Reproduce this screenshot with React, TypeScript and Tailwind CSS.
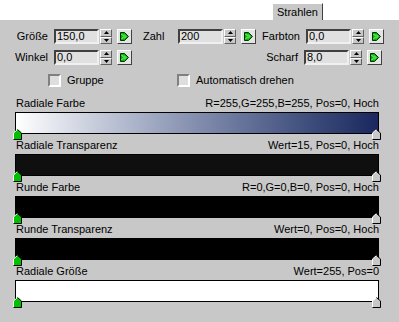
import React from "react";

const font = "font-['Liberation_Sans',Arial,sans-serif]";

function Spinner() {
  return (
    <div className="ml-[1px] flex h-[15px] w-[12px] flex-col">
      {[0, 1].map((i) => (
        <div
          key={i}
          className="flex h-[7.5px] items-center justify-center border border-t-white border-l-white border-r-[#606060] border-b-[#606060] bg-[#c8c8c8]"
        >
          <svg width="5" height="3" viewBox="0 0 5 3">
            {i === 0 ? (
              <polygon points="2.5,0 5,3 0,3" fill="#000" />
            ) : (
              <polygon points="0,0 5,0 2.5,3" fill="#000" />
            )}
          </svg>
        </div>
      ))}
    </div>
  );
}

function KeyButton() {
  return (
    <div className="ml-[5px] flex h-[15px] w-[15px] items-center justify-center border border-t-white border-l-white border-r-[#404040] border-b-[#404040] bg-[#e4e4e4]">
      <svg width="9" height="9" viewBox="0 0 9 9">
        <polygon points="0.5,0.5 4.5,0.5 8.5,4.5 4.5,8.5 0.5,8.5" fill="#00b400" stroke="#003000" />
        <polyline points="1.5,2 4,4.5 1.5,7" fill="none" stroke="#9cff9c" />
        <polyline points="4,2.5 6,4.5 4,6.5" fill="none" stroke="#9cff9c" />
      </svg>
    </div>
  );
}

function Field({ value }: { value: string }) {
  return (
    <div className="flex h-[15px] w-[45px] items-center border-2 border-t-[#404040] border-l-[#404040] border-r-[#f0f0f0] border-b-[#f0f0f0] bg-[#e0e0e0] pl-[1px] text-[11px] leading-none text-black">
      {value}
    </div>
  );
}

function SpinnerGroup({ value }: { value: string }) {
  return (
    <div className="flex items-center">
      <Field value={value} />
      <Spinner />
      <KeyButton />
    </div>
  );
}

function Checkbox({ label }: { label: string }) {
  return (
    <div className="flex items-center">
      <div className="h-[13px] w-[13px] border-2 border-t-[#808080] border-l-[#808080] border-r-white border-b-white bg-[#dedede]" />
      <span className="ml-[6px] text-[11px] leading-[13px]">{label}</span>
    </div>
  );
}

function Marker({ side }: { side: "left" | "right" }) {
  const green = side === "left";
  return (
    <svg
      width="9"
      height="11"
      viewBox="0 0 9 11"
      className={`absolute top-[16px] ${green ? "left-[-3px]" : "right-[-3px]"}`}
    >
      <polygon points="0.5,10.5 0.5,4 4.5,0.5 8.5,4 8.5,10.5" fill={green ? "#00c000" : "#c8c8c8"} />
      <polyline points="0.5,10.5 0.5,4 4.5,0.5" fill="none" stroke="#fff" />
      <polyline points="4.5,0.5 8.5,4 8.5,10.5 0.5,10.5" fill="none" stroke="#000" />
    </svg>
  );
}

const sections = [
  { name: "Radiale Farbe", info: "R=255,G=255,B=255, Pos=0, Hoch", bar: "bg-gradient-to-r from-white to-[#1b275e]" },
  { name: "Radiale Transparenz", info: "Wert=15, Pos=0, Hoch", bar: "bg-[#0f0f0f]" },
  { name: "Runde Farbe", info: "R=0,G=0,B=0, Pos=0, Hoch", bar: "bg-black" },
  { name: "Runde Transparenz", info: "Wert=0, Pos=0, Hoch", bar: "bg-black" },
  { name: "Radiale Größe", info: "Wert=255, Pos=0", bar: "bg-white" },
];

export default function App() {
  return (
    <div className={`h-[322px] w-[399px] overflow-hidden bg-white text-[11px] text-black ${font}`}>
      <div className="flex h-[20px] items-end">
        <div className="ml-[272px] flex h-[17px] w-[51px] items-center justify-center border-t border-l border-r border-t-white border-l-white border-r-[#404040] bg-[#c8c8c8] leading-none">
          Strahlen
        </div>
      </div>
      <div className="h-[302px] bg-[#c8c8c8] pt-[9px]">
        <div className="flex items-center">
          <div className="w-[48px] text-right leading-none">Größe</div>
          <div className="ml-[6px]"><SpinnerGroup value="150,0" /></div>
          <div className="w-[46px] pl-[11px] leading-none">Zahl</div>
          <SpinnerGroup value="200" />
          <div className="w-[50px] pr-[6px] text-right leading-none">Farbton</div>
          <SpinnerGroup value="0,0" />
        </div>
        <div className="mt-[6px] flex items-center">
          <div className="w-[48px] text-right leading-none">Winkel</div>
          <div className="ml-[6px]"><SpinnerGroup value="0,0" /></div>
          <div className="w-[122px]" />
          <div className="w-[50px] pr-[6px] text-right leading-none">Scharf</div>
          <SpinnerGroup value="8,0" />
        </div>
        <div className="mt-[9px] flex items-center">
          <div className="ml-[48px] w-[129px]">
            <Checkbox label="Gruppe" />
          </div>
          <Checkbox label="Automatisch drehen" />
        </div>
        <div className="mt-[10px] flex flex-col">
          {sections.map((s) => (
            <div key={s.name} className="ml-[15px] w-[364px] pb-[5px]">
              <div className="flex h-[13px] items-center justify-between pl-[1px] leading-[13px]">
                <span>{s.name}</span>
                <span>{s.info}</span>
              </div>
              <div className={`relative mt-[2px] h-[22px] border border-black ${s.bar}`}>
                <Marker side="left" />
                <Marker side="right" />
              </div>
            </div>
          ))}
        </div>
      </div>
    </div>
  );
}
